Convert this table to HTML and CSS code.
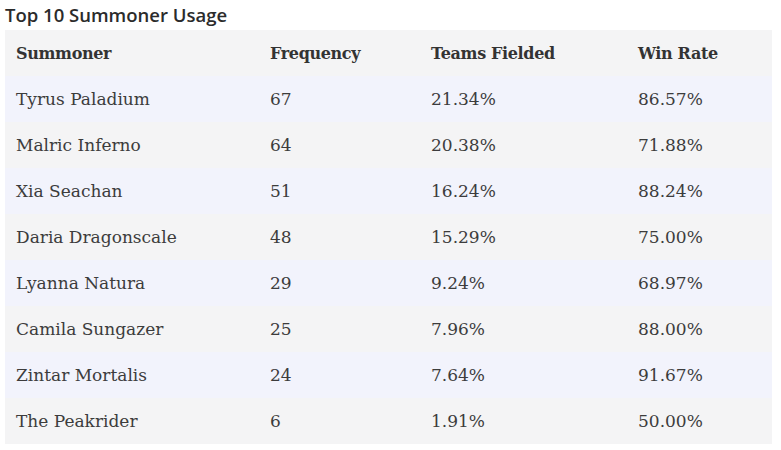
FILE: index.html
```html
<!DOCTYPE html>
<html>
<head>
<meta charset="utf-8">
<link rel="stylesheet" href="styles.css">
</head>
<body>
<div class="wrap">
  <h2 class="title">Top 10 Summoner Usage</h2>
  <table class="usage">
    <thead>
      <tr><th>Summoner</th><th>Frequency</th><th>Teams Fielded</th><th>Win Rate</th></tr>
    </thead>
    <tbody>
      <tr><td>Tyrus Paladium</td><td>67</td><td>21.34%</td><td>86.57%</td></tr>
      <tr><td>Malric Inferno</td><td>64</td><td>20.38%</td><td>71.88%</td></tr>
      <tr><td>Xia Seachan</td><td>51</td><td>16.24%</td><td>88.24%</td></tr>
      <tr><td>Daria Dragonscale</td><td>48</td><td>15.29%</td><td>75.00%</td></tr>
      <tr><td>Lyanna Natura</td><td>29</td><td>9.24%</td><td>68.97%</td></tr>
      <tr><td>Camila Sungazer</td><td>25</td><td>7.96%</td><td>88.00%</td></tr>
      <tr><td>Zintar Mortalis</td><td>24</td><td>7.64%</td><td>91.67%</td></tr>
      <tr><td>The Peakrider</td><td>6</td><td>1.91%</td><td>50.00%</td></tr>
    </tbody>
  </table>
</div>
</body>
</html>
```
FILE: styles.css
```css
html, body { margin: 0; padding: 0; background: #ffffff; }
.wrap { padding: 2px 8px 0 5px; }
.title {
  margin: 0;
  font-family: "Open Sans", sans-serif;
  font-weight: 600;
  font-size: 18.5px;
  line-height: 26px;
  color: #2b2b2b;
  height: 28px;
}
.usage {
  width: 767px;
  border-collapse: collapse;
  font-family: "DejaVu Serif", serif;
  font-size: 17px;
  color: #3c3c3c;
}
.usage th, .usage td {
  text-align: left;
  height: 46px;
  padding: 0 0 0 11px;
  box-sizing: border-box;
}
.usage th { font-weight: bold; font-size: 16px; letter-spacing: -0.35px; color: #333; }
.usage thead tr { background: #f4f4f5; }
.usage tbody tr:nth-child(odd) { background: #f2f3fc; }
.usage tbody tr:nth-child(even) { background: #f4f4f5; }
.usage th:nth-child(1) { width: 254px; }
.usage th:nth-child(2) { width: 161px; }
.usage th:nth-child(3) { width: 207px; }
```
